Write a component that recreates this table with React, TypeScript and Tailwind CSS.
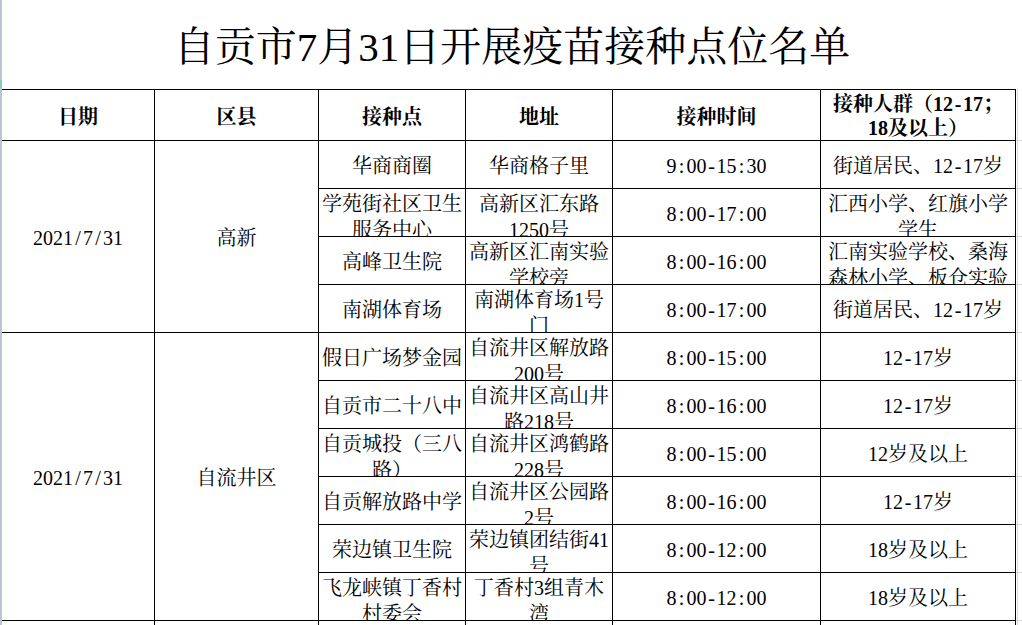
import React from "react";

const FONT = {
  fontFamily:
    '"Liberation Serif", "Noto Serif CJK SC", "Noto Sans CJK SC", serif',
};

const group1: string[][] = [
  ["华商商圈", "华商格子里", "9:00-15:30", "街道居民、12-17岁"],
  ["学苑街社区卫生服务中心", "高新区汇东路1250号", "8:00-17:00", "汇西小学、红旗小学学生"],
  ["高峰卫生院", "高新区汇南实验学校旁", "8:00-16:00", "汇南实验学校、桑海森林小学、板仓实验"],
  ["南湖体育场", "南湖体育场1号门", "8:00-17:00", "街道居民、12-17岁"],
];

const group2: string[][] = [
  ["假日广场梦金园", "自流井区解放路200号", "8:00-15:00", "12-17岁"],
  ["自贡市二十八中", "自流井区高山井路218号", "8:00-16:00", "12-17岁"],
  ["自贡城投（三八路）", "自流井区鸿鹤路228号", "8:00-15:00", "12岁及以上"],
  ["自贡解放路中学", "自流井区公园路2号", "8:00-16:00", "12-17岁"],
  ["荣边镇卫生院", "荣边镇团结街41号", "8:00-12:00", "18岁及以上"],
  ["飞龙峡镇丁香村村委会", "丁香村3组青木湾", "8:00-12:00", "18岁及以上"],
];

// SimSun-like half-width punctuation: give ":", "-" and "/" a 0.5em advance
function W({ text }: { text: string }) {
  const parts: React.ReactNode[] = [];
  let buf = "";
  let k = 0;
  for (const ch of text) {
    if (ch === ":" || ch === "-" || ch === "/") {
      if (buf) parts.push(<React.Fragment key={k++}>{buf}</React.Fragment>);
      buf = "";
      parts.push(
        <span key={k++} className="inline-block w-[0.5em] text-center">
          {ch}
        </span>
      );
    } else buf += ch;
  }
  if (buf) parts.push(<React.Fragment key={k++}>{buf}</React.Fragment>);
  return <>{parts}</>;
}

function Cell({
  children,
  className = "",
}: {
  children?: React.ReactNode;
  className?: string;
}) {
  return (
    <div
      className={
        "flex items-center-safe justify-center overflow-hidden border-r border-b border-black px-[3px] text-center " +
        className
      }
    >
      <div className="w-full">{children}</div>
    </div>
  );
}

function Extra() {
  return (
    <div className="border-b border-[#d3d9e4]">
      <div className="ml-px h-full border-l border-[#d3d9e4]" />
    </div>
  );
}

function Group({ rows, name }: { rows: string[][]; name: string }) {
  const span = rows.length === 4 ? "row-span-4" : "row-span-6";
  return (
    <>
      {rows.map((r, i) => (
        <React.Fragment key={i}>
          {i === 0 && (
            <>
              <Cell className={span + " pt-[3px] leading-[26px]"}>
                <W text="2021/7/31" />
              </Cell>
              <Cell className={span + " pt-[3px] leading-[26px]"}>{name}</Cell>
            </>
          )}
          <Cell className="pt-[2px] leading-[26px]">
            <W text={r[0]} />
          </Cell>
          <Cell className="pt-[2px] leading-[26px]">
            <W text={r[1]} />
          </Cell>
          <Cell className="pt-[2px] leading-[26px]">
            <W text={r[2]} />
          </Cell>
          <Cell className="pt-[2px] leading-[26px]">
            <W text={r[3]} />
          </Cell>
          <Extra />
        </React.Fragment>
      ))}
    </>
  );
}

export default function App() {
  return (
    <div
      className="flex h-[625px] w-[1022px] overflow-hidden bg-white text-[20px] text-black"
      style={FONT}
    >
      <div className="flex w-[2px] shrink-0 flex-col bg-[#bcc5d6]">
        <div className="mt-[80px] h-[8px] bg-[#7fd0b0]" />
      </div>
      <div className="flex w-[1020px] flex-col">
        <div className="flex h-[89px] shrink-0 items-center justify-center pt-[5px] text-[41px] leading-none">
          自贡市7月31日开展疫苗接种点位名单
        </div>
        <div className="grid shrink-0 grid-cols-[153px_164px_147px_147px_208px_195px_6px] grid-rows-[52px_repeat(12,48px)]">
          <Cell className="border-t pt-[4px] font-bold leading-[26px]">日期</Cell>
          <Cell className="border-t pt-[4px] font-bold leading-[26px]">区县</Cell>
          <Cell className="border-t pt-[4px] font-bold leading-[26px]">接种点</Cell>
          <Cell className="border-t pt-[4px] font-bold leading-[26px]">地址</Cell>
          <Cell className="border-t pt-[4px] font-bold leading-[26px]">接种时间</Cell>
          <Cell className="border-t pt-[2px] font-bold leading-[24px]">
            <W text="接种人群（12-17；" />
            <br />
            18及以上）
          </Cell>
          <Extra />
          <Group rows={group1} name="高新" />
          <Group rows={group2} name="自流井区" />
          <Cell />
          <Cell />
          <Cell />
          <Cell />
          <Cell />
          <Cell />
          <Extra />
        </div>
      </div>
    </div>
  );
}
